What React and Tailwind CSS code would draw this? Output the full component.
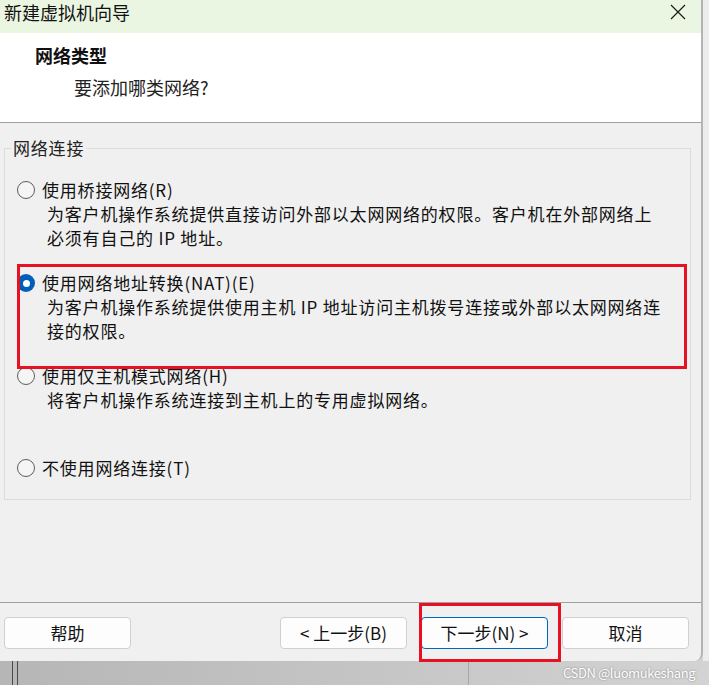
/*
==================================================
NEW VM WIZARD - NETWORK TYPE STEP
--------------------------------------------------
Windows style dialog page with a group of radio
options, a footer button row and two red
annotation boxes drawn over it.
==================================================
*/

const FONT = { fontFamily: '"Noto Sans CJK SC", "Noto Sans", sans-serif' };

const OPTIONS = [
  {
    label: "使用桥接网络(R)",
    desc: ["为客户机操作系统提供直接访问外部以太网网络的权限。客户机在外部网络上", "必须有自己的 IP 地址。"],
    checked: false,
    gap: "mt-0",
  },
  {
    label: "使用网络地址转换(NAT)(E)",
    desc: ["为客户机操作系统提供使用主机 IP 地址访问主机拨号连接或外部以太网网络连", "接的权限。"],
    checked: true,
    gap: "mt-[21px]",
  },
  {
    label: "使用仅主机模式网络(H)",
    desc: ["将客户机操作系统连接到主机上的专用虚拟网络。"],
    checked: false,
    gap: "mt-[21px]",
  },
  {
    label: "不使用网络连接(T)",
    desc: [],
    checked: false,
    gap: "mt-[44px]",
  },
];

/* radio circle */
const Radio = ({ checked }) =>
  checked ? (
    <span className="w-[18px] h-[18px] rounded-full bg-[#005fb8] flex items-center justify-center shrink-0">
      <span className="w-[7px] h-[7px] rounded-full bg-white"></span>
    </span>
  ) : (
    <span className="w-[18px] h-[18px] rounded-full border border-[#5c5c5c] bg-[#f5f5f5] shrink-0"></span>
  );

const Option = ({ label, desc, checked, gap }) => (
  <div className={gap}>
    <div className="flex items-center h-[24px]">
      <Radio checked={checked} />
      <span className="ml-[7px] text-[#111]">{label}</span>
    </div>
    {desc.map((line) => (
      <div key={line} className="pl-[30px] leading-[24px] h-[24px] text-[#111] whitespace-nowrap">
        {line}
      </div>
    ))}
  </div>
);

const Button = ({ children, focused }) => (
  <button
    className={`w-[127px] h-[32px] rounded-[4px] bg-[#fdfdfd] text-[17px] text-[#111] flex items-center justify-center border ${
      focused ? "border-[#0067c0]" : "border-[#d0d0d0]"
    }`}
  >
    {children}
  </button>
);

export default function App() {
  return (
    <div
      className="relative w-[709px] h-[685px] overflow-hidden flex flex-col bg-linear-to-r from-[#b6b6b6] to-[#d3d3d3] text-[17px] tracking-[0.8px]"
      style={FONT}
    >
      {/* ====== WINDOW ROW ====== */}
      <div className="flex h-[661px] shrink-0">
        <div className="w-[703px] h-full flex flex-col bg-[#f0f0f0] border-r-2 border-[#b4b4b4] rounded-br-[8px] overflow-hidden">

          {/* Title bar */}
          <div className="h-[33px] shrink-0 bg-[#eaf6e1] flex justify-between pl-[4px] pr-[15px]">
            <span className="text-[18px] leading-[24px] tracking-normal text-[#111]">新建虚拟机向导</span>
            <svg width="16" height="16" viewBox="0 0 16 16" className="mt-[4px]">
              <path d="M1 1 L15 15 M15 1 L1 15" stroke="#1a1a1a" strokeWidth="1.2" />
            </svg>
          </div>

          {/* Header */}
          <div className="h-[90px] shrink-0 bg-white border-b border-[#a0a0a0] pt-[10px] pl-[35px] tracking-normal">
            <div className="text-[18px] leading-[24px] font-bold text-[#111]">网络类型</div>
            <div className="text-[18px] leading-[24px] mt-[8px] ml-[39px] text-[#222]">要添加哪类网络?</div>
          </div>

          {/* Body */}
          <div className="h-[479px] shrink-0 pt-[13px] pl-[4px]">
            <fieldset className="w-[687px] h-[364px] border border-[#dcdcdc]">
              <legend className="ml-[6px] px-[2px] leading-[24px] text-[#222]">网络连接</legend>
              <div className="pl-[12px] pt-[18px]">
                {OPTIONS.map((o) => (
                  <Option key={o.label} {...o} />
                ))}
              </div>
            </fieldset>
          </div>

          {/* Footer */}
          <div className="flex-1 border-t border-[#a0a0a0] pt-[14px] pl-[4px] pr-[12px] flex items-start tracking-normal">
            <Button>帮助</Button>
            <div className="ml-auto flex gap-[14px]">
              <Button>&lt; 上一步(B)</Button>
              <Button focused>下一步(N) &gt;</Button>
              <Button>取消</Button>
            </div>
          </div>
        </div>
        <div className="flex-1 bg-[#ececec]"></div>
      </div>

      {/* ====== DESKTOP STRIP BELOW ====== */}
      <div className="flex-1 flex items-center">
        <div className="self-stretch w-px bg-[#4a4a4a] ml-[12px] shrink-0"></div>
        <div className="self-stretch w-px bg-[#4a4a4a] ml-[4px] shrink-0"></div>
        <div className="self-stretch w-px bg-[#a6a6a6] ml-[450px] shrink-0"></div>
        <span className="ml-[94px] shrink-0 whitespace-nowrap text-[13px] tracking-[-0.4px] text-white [text-shadow:0_0_2px_#777]">
          CSDN @luomukeshang
        </span>
      </div>

      {/* ====== RED ANNOTATIONS ====== */}
      <div className="absolute left-[17px] top-[264px] w-[670px] h-[105px] border-[3px] border-[#e81123]"></div>
      <div className="absolute left-[419px] top-[603px] w-[142px] h-[59px] border-[3px] border-[#e81123]"></div>
    </div>
  );
}
